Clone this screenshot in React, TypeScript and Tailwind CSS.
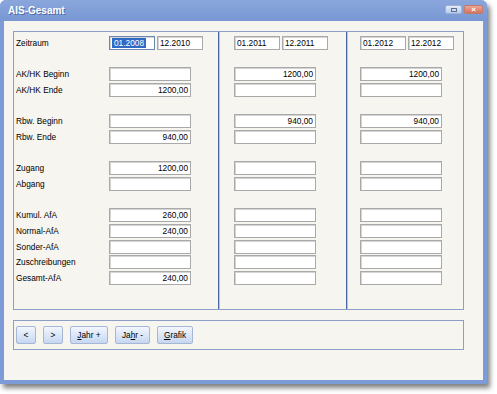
const rows = [
  "Zeitraum",
  "",
  "AK/HK Beginn",
  "AK/HK Ende",
  "",
  "Rbw. Beginn",
  "Rbw. Ende",
  "",
  "Zugang",
  "Abgang",
  "",
  "Kumul. AfA",
  "Normal-AfA",
  "Sonder-AfA",
  "Zuschreibungen",
  "Gesamt-AfA",
];

// values per column, keyed by row label
const columns = [
  {
    from: "01.2008",
    to: "12.2010",
    values: {
      "AK/HK Ende": "1200,00",
      "Rbw. Ende": "940,00",
      Zugang: "1200,00",
      "Kumul. AfA": "260,00",
      "Normal-AfA": "240,00",
      "Gesamt-AfA": "240,00",
    } as Record<string, string>,
  },
  {
    from: "01.2011",
    to: "12.2011",
    values: { "AK/HK Beginn": "1200,00", "Rbw. Beginn": "940,00" } as Record<string, string>,
  },
  {
    from: "01.2012",
    to: "12.2012",
    values: { "AK/HK Beginn": "1200,00", "Rbw. Beginn": "940,00" } as Record<string, string>,
  },
];

function Field({ value, align = "right", wide = true, focus = false }: { value?: string; align?: "left" | "right"; wide?: boolean; focus?: boolean }) {
  return (
    <div
      className={`h-[14px] ${wide ? "w-[82px]" : "w-[46px]"} bg-white border ${
        focus ? "border-[#6d87b3]" : "border-[#a9a9a9]"
      } shadow-[inset_1px_1px_0_#d4d4d4] flex items-center px-[2px] text-[8.3px] leading-none ${
        align === "right" ? "justify-end" : "justify-start"
      }`}
    >
      {focus && value ? <span className="bg-[#316ac5] text-white px-[2px] py-px">{value}</span> : value}
    </div>
  );
}

function Column({ col, first }: { col: (typeof columns)[number]; first?: boolean }) {
  return (
    <div className="flex flex-col">
      {rows.map((r, i) => (
        <div key={i} className="h-[15.67px] flex items-start">
          {i === 0 ? (
            <div className="flex gap-[2px]">
              <Field value={col.from} align="left" wide={false} focus={first} />
              <Field value={col.to} align="left" wide={false} />
            </div>
          ) : r ? (
            <Field value={col.values[r]} />
          ) : null}
        </div>
      ))}
    </div>
  );
}

function Btn({ children, w }: { children: React.ReactNode; w: string }) {
  return (
    <div
      className={`${w} h-[18px] flex items-center justify-center rounded-[2px] border border-[#a6b7d6] bg-gradient-to-b from-[#f2f6fd] to-[#c7d7f1] text-[8.3px] text-black`}
    >
      {children}
    </div>
  );
}

export default function App() {
  return (
    <div className="w-[497px] h-[394px] bg-white font-['Liberation_Sans',Arial,sans-serif] text-black">
      <div className="w-[487px] h-[384px] flex flex-col rounded-t-[6px] bg-[#7d9bd6] shadow-[3px_4px_5px_rgba(0,0,0,0.5)]">
        {/* title bar */}
        <div className="h-[21px] flex items-center justify-between pl-[8px] pr-[4px] rounded-t-[6px] bg-gradient-to-b from-[#8aa6dc] to-[#7897d3]">
          <span className="text-[10px] font-bold text-white [text-shadow:1px_1px_0_#4d6aa6]">AIS-Gesamt</span>
          <div className="flex gap-[2px] pb-[2px]">
            <div className="w-[17px] h-[9px] rounded-[2px] border border-[#9fb3d9] bg-gradient-to-b from-[#e4ebf8] to-[#b9cbeb] flex items-center justify-center">
              <div className="w-[6px] h-[4px] border border-[#5d6f94]" />
            </div>
            <div className="w-[19px] h-[9px] rounded-[2px] border border-[#c57969] bg-gradient-to-b from-[#eba594] to-[#d4735f] flex items-center justify-center text-white text-[8px] font-bold leading-none">
              ×
            </div>
          </div>
        </div>

        {/* body */}
        <div className="flex-1 mx-[4px] mb-[4px] bg-[#f6f5f0] pl-[9px] pt-[10px]">
          <div className="w-[451px] h-[279px] flex border border-[#8e9ec6]">
            <div className="w-[204px] flex pl-[2px] pt-[4px]">
              <div className="w-[93px] flex flex-col">
                {rows.map((r, i) => (
                  <div key={i} className="h-[15.67px] text-[8.3px] leading-[14px]">
                    {r}
                  </div>
                ))}
              </div>
              <Column col={columns[0]} first />
            </div>
            <div className="w-[128px] border-l border-[#4b66a5] shadow-[inset_1px_0_0_#b7c3df] pt-[4px] pl-[15px]">
              <Column col={columns[1]} />
            </div>
            <div className="flex-1 border-l border-[#4b66a5] shadow-[inset_1px_0_0_#b7c3df] pt-[4px] pl-[13px]">
              <Column col={columns[2]} />
            </div>
          </div>

          <div className="w-[451px] h-[30px] mt-[10px] border border-[#8e9ec6] flex items-center gap-[7px] pl-[2px]">
            <Btn w="w-[20px]">&lt;</Btn>
            <Btn w="w-[20px]">&gt;</Btn>
            <Btn w="w-[38px]">
              <u>J</u>ahr +
            </Btn>
            <Btn w="w-[35px]">
              Ja<u>h</u>r -
            </Btn>
            <Btn w="w-[36px]">
              <u>G</u>rafik
            </Btn>
          </div>
        </div>
      </div>
    </div>
  );
}
